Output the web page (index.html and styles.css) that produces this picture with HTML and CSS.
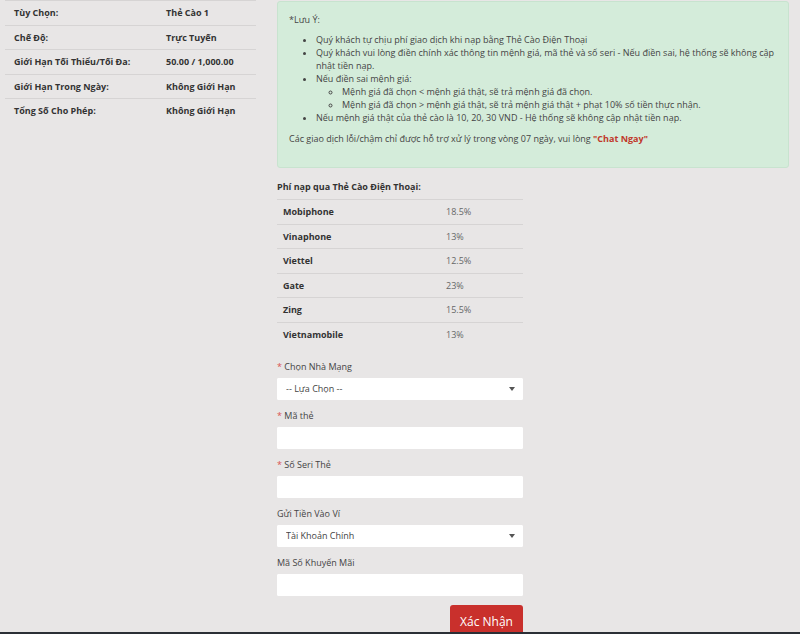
FILE: index.html
```html
<!DOCTYPE html>
<html lang="vi">
<head>
  <meta charset="UTF-8" />
  <meta name="viewport" content="width=device-width, initial-scale=1.0" />
  <title>Nạp Tiền - Thẻ Cào</title>
  <link rel="stylesheet" href="styles.css">
</head>
<body>
  <div class="page">
    <div class="side">
      <table class="info-table">
        <tr><td>Tùy Chọn:</td><td>Thẻ Cào 1</td></tr>
        <tr><td>Chế Độ:</td><td>Trực Tuyến</td></tr>
        <tr><td>Giới Hạn Tối Thiểu/Tối Đa:</td><td>50.00 / 1,000.00</td></tr>
        <tr><td>Giới Hạn Trong Ngày:</td><td>Không Giới Hạn</td></tr>
        <tr><td>Tổng Số Cho Phép:</td><td>Không Giới Hạn</td></tr>
      </table>
    </div>

    <div class="main">
      <div class="alert">
        <p class="alert-title">*Lưu Ý:</p>
        <ul>
          <li>Quý khách tự chịu phí giao dịch khi nạp bằng Thẻ Cào Điện Thoại</li>
          <li>Quý khách vui lòng điền chính xác thông tin mệnh giá, mã thẻ và số seri - Nếu điền sai, hệ thống sẽ không cập nhật tiền nạp.</li>
          <li>Nếu điền sai mệnh giá:
            <ul>
              <li>Mệnh giá đã chọn &lt; mệnh giá thật, sẽ trả mệnh giá đã chọn.</li>
              <li>Mệnh giá đã chọn &gt; mệnh giá thật, sẽ trả mệnh giá thật + phạt 10% số tiền thực nhận.</li>
            </ul>
          </li>
          <li>Nếu mệnh giá thật của thẻ cào là 10, 20, 30 VND - Hệ thống sẽ không cập nhật tiền nạp.</li>
        </ul>
        <p>Các giao dịch lỗi/chậm chỉ được hỗ trợ xử lý trong vòng 07 ngày, vui lòng <a href="#" class="chat">"Chat Ngay"</a></p>
      </div>

      <div class="deposit">
        <h4>Phí nạp qua Thẻ Cào Điện Thoại:</h4>
        <table class="fee-table">
          <tr><td>Mobiphone</td><td>18.5%</td></tr>
          <tr><td>Vinaphone</td><td>13%</td></tr>
          <tr><td>Viettel</td><td>12.5%</td></tr>
          <tr><td>Gate</td><td>23%</td></tr>
          <tr><td>Zing</td><td>15.5%</td></tr>
          <tr><td>Vietnamobile</td><td>13%</td></tr>
        </table>

        <form id="cardForm">
          <div class="form-group">
            <label><span class="req">*</span> Chọn Nhà Mạng</label>
            <div class="select-wrap">
              <select id="network">
                <option>-- Lựa Chọn --</option>
                <option>Mobiphone</option>
                <option>Vinaphone</option>
                <option>Viettel</option>
                <option>Gate</option>
                <option>Zing</option>
                <option>Vietnamobile</option>
              </select>
            </div>
          </div>
          <div class="form-group">
            <label><span class="req">*</span> Mã thẻ</label>
            <input type="text" id="cardCode" />
          </div>
          <div class="form-group">
            <label><span class="req">*</span> Số Seri Thẻ</label>
            <input type="text" id="serial" />
          </div>
          <div class="form-group">
            <label>Gửi Tiền Vào Ví</label>
            <div class="select-wrap">
              <select id="wallet">
                <option>Tài Khoản Chính</option>
              </select>
            </div>
          </div>
          <div class="form-group">
            <label>Mã Số Khuyến Mãi</label>
            <input type="text" id="promo" />
          </div>
          <div class="actions">
            <button type="button" id="submitBtn">Xác Nhận</button>
          </div>
        </form>
      </div>
    </div>
  </div>
  <div class="bottom-bar"></div>
</body>
</html>
```

FILE: styles.css
```css
body {
  margin: 0;
  font-family: 'Open Sans', 'Noto Sans', sans-serif;
  font-size: 9px;
  line-height: 13px;
  background: #e8e6e6;
  color: #333;
}

.page {
  display: flex;
  align-items: flex-start;
  padding-left: 5px;
}

.side {
  width: 251px;
  flex-shrink: 0;
}

.main {
  width: 512px;
  margin-left: 21px;
  padding-top: 1px;
}

table {
  border-collapse: collapse;
  width: 100%;
}

td {
  border-top: 1px solid #d6d4d4;
  line-height: 13.5px;
}

.info-table td {
  padding: 5px 9px;
  font-weight: 700;
}

.info-table td:first-child {
  width: 134px;
}

/* notice box */
.alert {
  background: #d4ecda;
  border: 1px solid #c8e3cf;
  border-radius: 3px;
  padding: 11px 11px 13px;
  color: #444;
}

.alert p {
  margin: 0;
}

.alert-title {
  margin-bottom: 7px !important;
}

.alert ul {
  margin: 0 0 8px;
  padding-left: 27px;
}

.alert ul ul {
  margin: 0;
  padding-left: 26px;
  list-style-type: circle;
}

.chat {
  color: #c0392b;
  font-weight: 700;
  text-decoration: none;
}

.alert p:last-child {
  margin-bottom: 9px;
}

/* fees + form */
.deposit {
  width: 246px;
}

.deposit h4 {
  margin: 12px 0 6px;
  font-size: 9px;
  font-weight: 700;
}

.fee-table td {
  padding: 5px 6px;
  color: #666;
}

.fee-table td:first-child {
  width: 151px;
  font-weight: 700;
  color: #333;
}

#cardForm {
  margin-top: 14px;
}

.form-group {
  margin-bottom: 9.5px;
}

label {
  display: block;
  margin-bottom: 4.5px;
  color: #444;
}

.req {
  color: #d9534f;
}

input,
select {
  display: block;
  width: 100%;
  height: 22px;
  box-sizing: border-box;
  border: 1px solid #fff;
  border-radius: 1px;
  background: #fff;
  padding: 0 8px;
  font-family: inherit;
  font-size: 9px;
  color: #444;
}

select {
  appearance: none;
  -webkit-appearance: none;
}

.select-wrap {
  position: relative;
}

.select-wrap::after {
  content: "";
  position: absolute;
  right: 8px;
  top: 9px;
  border-left: 3.5px solid transparent;
  border-right: 3.5px solid transparent;
  border-top: 4px solid #555;
}

.actions {
  display: flex;
  justify-content: flex-end;
}

#submitBtn {
  background: #c9302c;
  color: #fff;
  border: none;
  border-radius: 3px;
  width: 73px;
  height: 34px;
  font-family: inherit;
  font-size: 12px;
  padding: 0 0 1px;
  cursor: pointer;
}

.bottom-bar {
  position: fixed;
  left: 0;
  right: 0;
  bottom: 0;
  height: 2px;
  background: #2b2f36;
}
```
